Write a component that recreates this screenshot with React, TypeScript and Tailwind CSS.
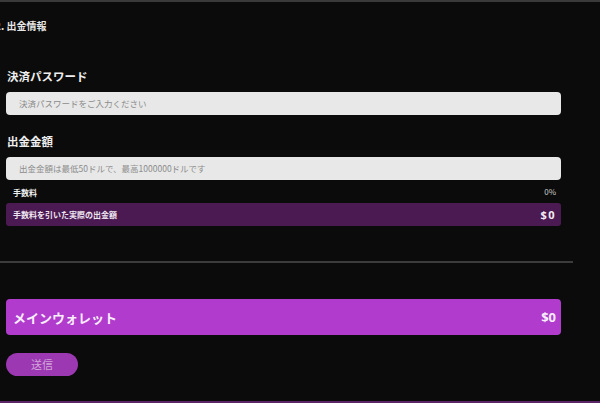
import React from "react";

export default function App() {
  return (
    <div
      className="relative w-[600px] h-[403px] overflow-hidden bg-[#0b0b0b] text-white"
      style={{ fontFamily: '"Noto Sans CJK JP", "Noto Sans", sans-serif' }}
    >
      <div className="h-[2px] bg-[#3a3a3a]" />
      <div className="pl-[6px] w-[561px]">
        <div className="mt-[17px] h-[14px] flex items-center text-[10px] font-bold leading-none text-[#e6e6e6] -ml-[11px]">
          2. 出金情報
        </div>

        <div className="mt-[37px] h-[14px] flex items-center text-[11.5px] font-bold leading-none text-[#eeeeee] pl-[1px]">
          決済パスワード
        </div>
        <div className="mt-[8px] h-[23px] rounded-[4px] bg-[#e8e8e8] flex items-center pl-[13px] text-[8.5px] text-[#8c8c8c] leading-none">
          決済パスワードをご入力ください
        </div>

        <div className="mt-[20px] h-[14px] flex items-center text-[11.5px] font-bold leading-none text-[#eeeeee] pl-[1px]">
          出金金額
        </div>
        <div className="mt-[8px] h-[23px] rounded-[4px] bg-[#e8e8e8] flex items-center pl-[13px] text-[8.5px] text-[#8c8c8c] leading-none">
          出金金額は最低50ドルで、最高1000000ドルです
        </div>

        <div className="mt-[5px] h-[16px] flex items-center justify-between pl-[7px] pr-[5px] text-[8px] font-bold leading-none">
          <span className="text-[#f0f0f0]">手数料</span>
          <span className="text-[#c8c8c8] font-normal -mt-[3px]">0%</span>
        </div>
        <div className="mt-[2px] h-[23px] rounded-[3px] bg-[#4b1a52] flex items-center justify-between pl-[7px] pr-[5px] leading-none">
          <span className="text-[8px] font-bold text-[#f0e6f2]">手数料を引いた実際の出金額</span>
          <span className="text-[11px] font-bold tracking-[1.5px] text-[#f2eaf4]" style={{ fontFamily: '"Open Sans", sans-serif' }}>
            $0
          </span>
        </div>
      </div>

      <div className="mt-[35px] h-[2px] w-[573px] bg-[#3c3c3c]" />

      <div className="pl-[6px] w-[561px]">
        <div className="mt-[36px] h-[36px] rounded-[4px] bg-[#b03bcd] flex items-center justify-between pl-[7px] pr-[5px] leading-none">
          <span className="text-[13px] font-bold text-[#f8eefa]">メインウォレット</span>
          <span className="text-[13px] font-bold text-[#f8eefa]" style={{ fontFamily: '"Open Sans", sans-serif' }}>
            $0
          </span>
        </div>
        <div className="mt-[18px] h-[23px] w-[72px] rounded-full bg-[#9b38b2] flex items-center justify-center text-[11px] leading-none text-[#d2a4da]">
          送信
        </div>
      </div>

      <div className="absolute bottom-0 left-0 right-0 h-[2px] bg-[#5a2466]" />
    </div>
  );
}
